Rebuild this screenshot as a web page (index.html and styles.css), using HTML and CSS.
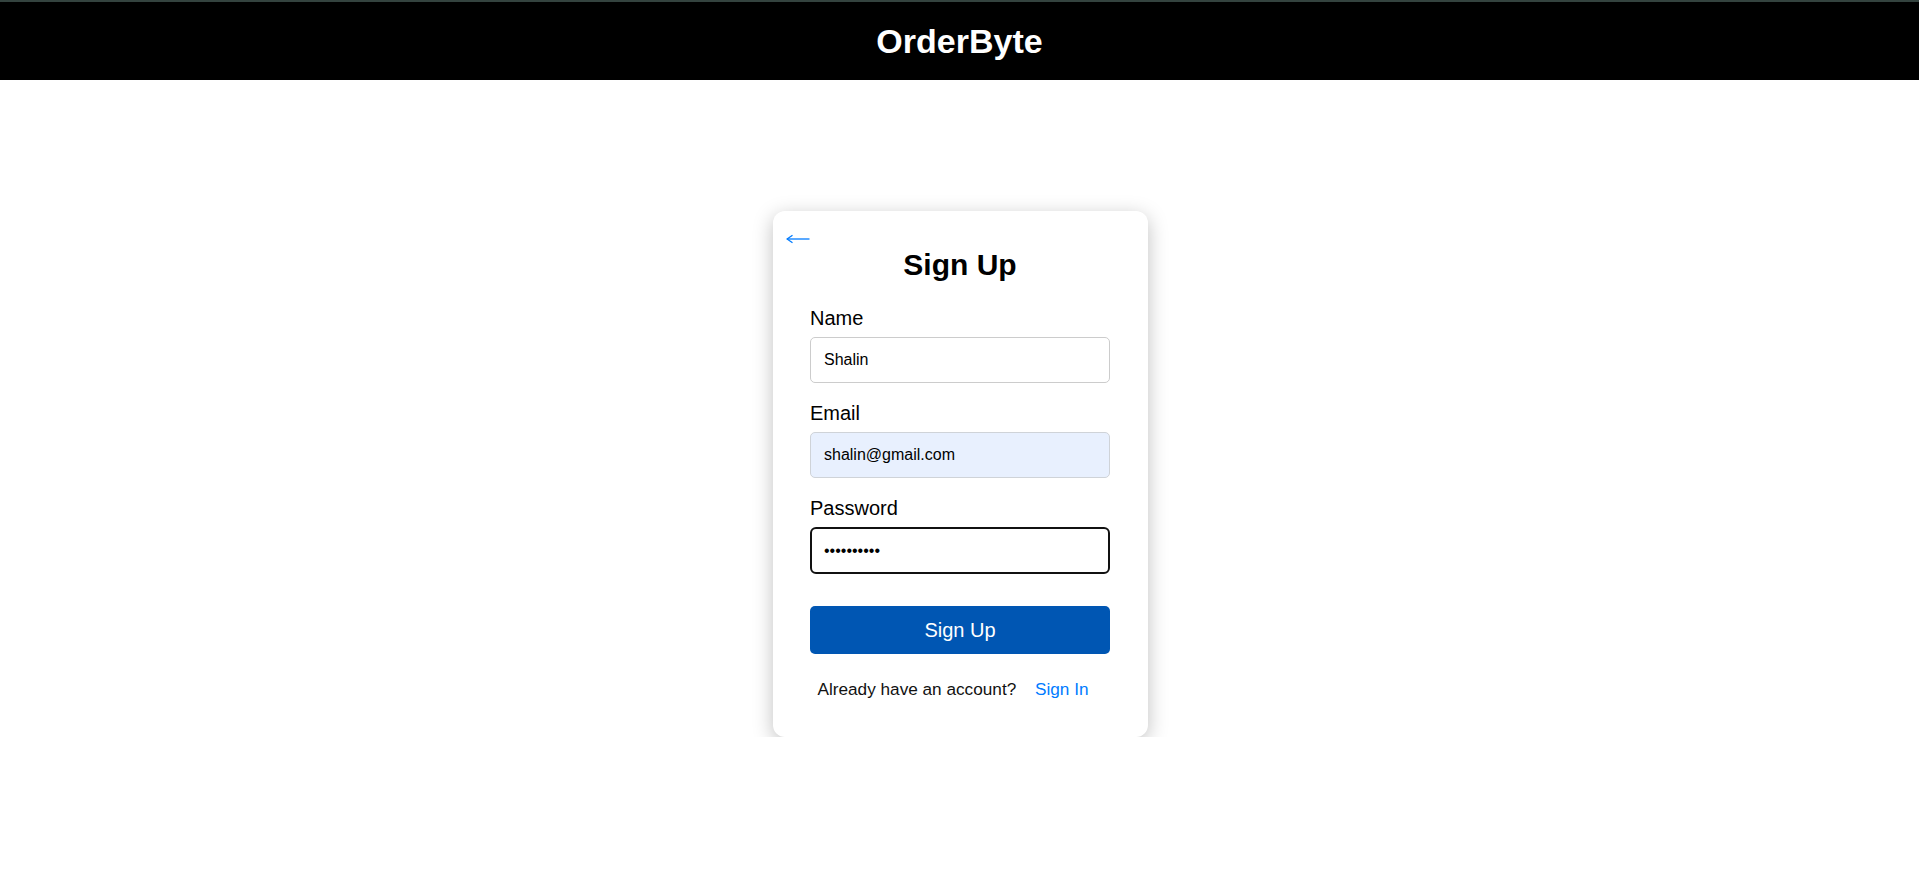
FILE: index.html
```html
<!DOCTYPE html>
<html lang="en">
<head>
<meta charset="utf-8">
<title>OrderByte - Sign Up</title>
<link rel="stylesheet" href="styles.css">
</head>
<body>
<header class="topbar">
  <h1 class="brand">OrderByte</h1>
</header>
<main class="page">
  <div class="card">
    <button class="back" type="button" aria-label="Back">
      <svg width="24" height="10" viewBox="0 0 24 10" fill="none" stroke="#007bff" stroke-width="1.3">
        <path d="M1 5 H23.5"/>
        <path d="M6.5 1.2 L1 5 L6.5 8.8"/>
      </svg>
    </button>
    <h2 class="title">Sign Up</h2>
    <form class="form">
      <div class="field">
        <label class="label">Name</label>
        <input class="input" type="text" value="Shalin">
      </div>
      <div class="field">
        <label class="label">Email</label>
        <input class="input input-filled" type="email" value="shalin@gmail.com">
      </div>
      <div class="field">
        <label class="label">Password</label>
        <input class="input input-focus" type="password" value="shalin1234">
      </div>
      <button class="submit" type="button">Sign Up</button>
    </form>
    <p class="switch">Already have an account? <button class="link" type="button">Sign In</button></p>
  </div>
</main>
</body>
</html>
```
FILE: styles.css
```css
* { box-sizing: border-box; }

html, body {
  margin: 0;
  padding: 0;
  background: #fff;
  font-family: "Liberation Sans", Arial, sans-serif;
  color: #000;
}

.topbar {
  height: 80px;
  background: #000;
  border-top: 2px solid #34433f;
  display: flex;
  align-items: center;
  justify-content: center;
}

.brand {
  margin: 0;
  color: #fff;
  font-size: 34px;
  font-weight: 700;
  line-height: 38px;
}

.page {
  display: flex;
  justify-content: center;
  padding: 131px 0 0 2px;
}

.card {
  position: relative;
  width: 375px;
  background: #fff;
  border-radius: 12px;
  box-shadow: 0 5px 20px rgba(0, 0, 0, 0.25);
  padding: 37px 38px 38px 37px;
}

.back {
  position: absolute;
  top: 23px;
  left: 13px;
  padding: 0;
  margin: 0;
  border: 0;
  background: none;
  line-height: 0;
  cursor: pointer;
}

.title {
  margin: 0 0 25px;
  text-align: center;
  font-size: 30px;
  font-weight: 700;
  line-height: 34px;
}

.form {
  display: flex;
  flex-direction: column;
}

.field {
  display: flex;
  flex-direction: column;
  margin-bottom: 19px;
}

.label {
  font-size: 20px;
  line-height: 23px;
  margin-bottom: 7px;
}

.input {
  width: 300px;
  height: 46px;
  border: 1px solid #ccc;
  border-radius: 5px;
  padding: 0 13px;
  font-family: "Liberation Sans", Arial, sans-serif;
  font-size: 16px;
  color: #000;
  background: #fff;
  outline: none;
}

.input-filled {
  background: #e8f0fe;
  border-color: #cfd3d8;
}

.input-focus {
  height: 47px;
  border: 2px solid #111;
  border-radius: 6px;
  padding: 0 12px;
}

.submit {
  margin-top: 13px;
  width: 300px;
  height: 48px;
  border: 0;
  border-radius: 5px;
  background: #0056b3;
  color: #fff;
  font-family: "Liberation Sans", Arial, sans-serif;
  font-size: 20px;
  cursor: pointer;
}

.switch {
  margin: 25px 0 0;
  text-align: center;
  font-size: 17.2px;
  line-height: 20px;
  color: #111;
}

.link {
  border: 0;
  background: none;
  padding: 0 14px;
  margin: 0;
  font-family: "Liberation Sans", Arial, sans-serif;
  font-size: 17.2px;
  line-height: 20px;
  color: #007bff;
  cursor: pointer;
}
```
